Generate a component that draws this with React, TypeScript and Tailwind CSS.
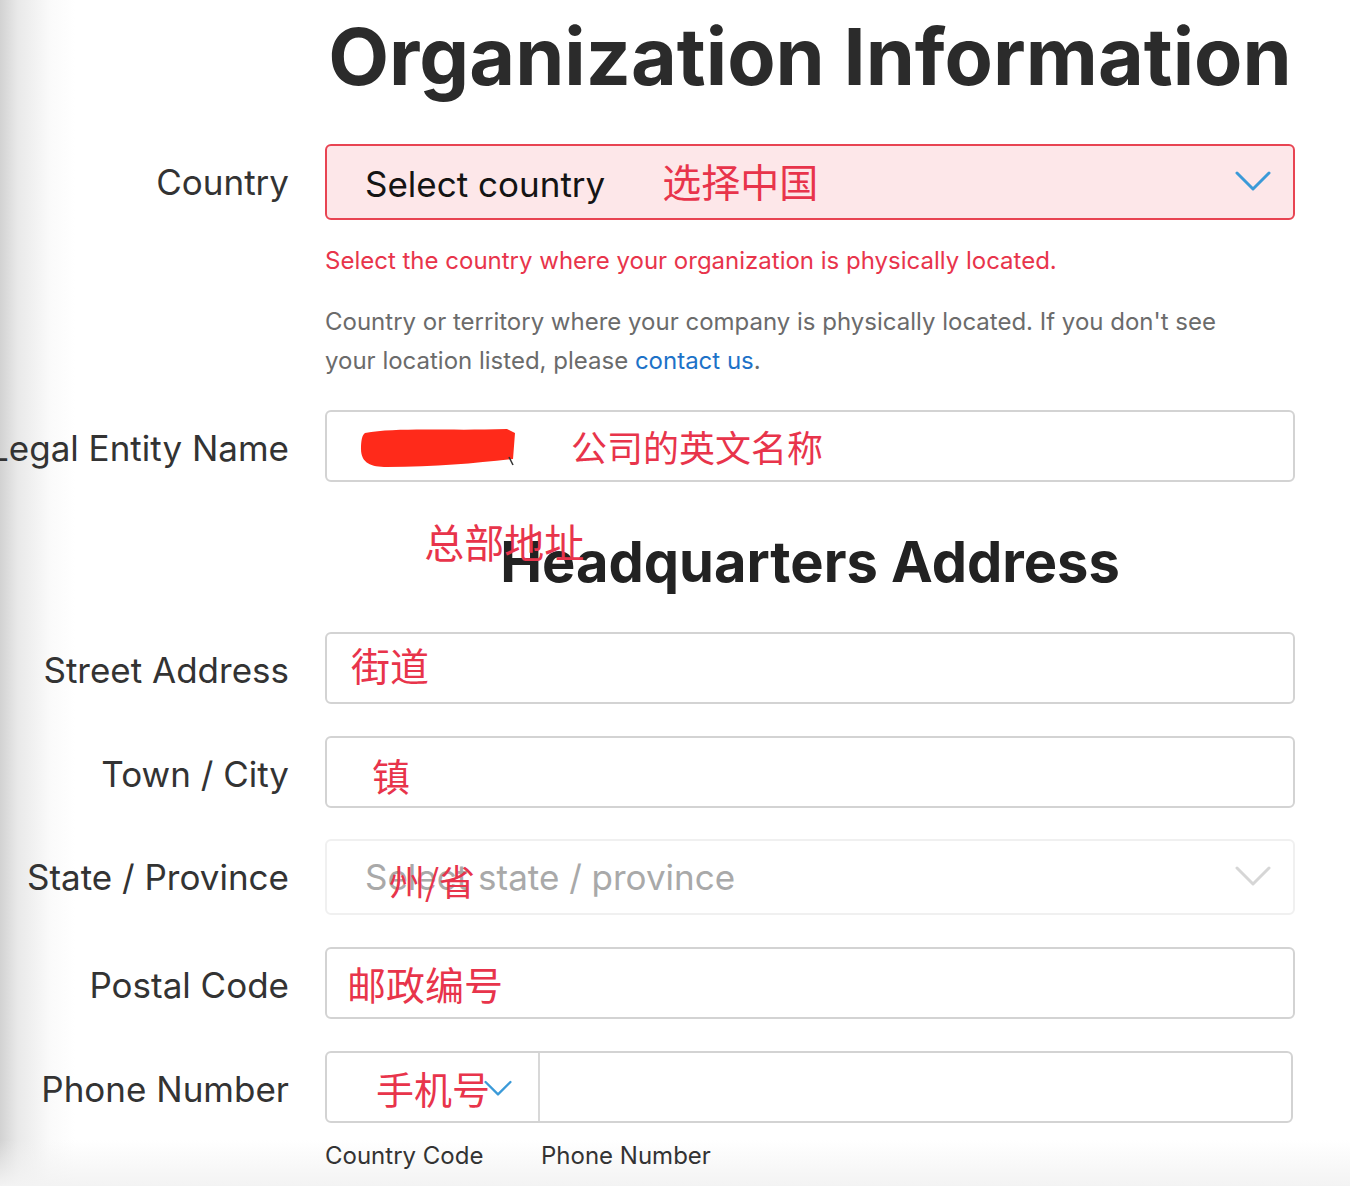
import React from 'react';

const sans = "font-['Inter','Noto_Sans','Noto_Sans_CJK_SC',sans-serif]";
const cjk = "font-['Noto_Sans_CJK_SC','Noto_Sans',sans-serif] text-[#e8344b]";

function Chevron({ color, className }: { color: string; className?: string }) {
  return (
    <svg viewBox="0 0 36 22" className={className} fill="none">
      <polyline points="2,2 18,18 34,2" stroke={color} strokeWidth="3" strokeLinecap="round" strokeLinejoin="round" />
    </svg>
  );
}

function Row({ label, children, labelClass = '' }: { label: string; children: React.ReactNode; labelClass?: string }) {
  return (
    <div className="flex items-start gap-9">
      <div className={`w-[289px] shrink-0 flex justify-end items-center h-[72px] ${labelClass}`}>
        <span className="whitespace-nowrap text-[35px] text-[#333] pt-1">{label}</span>
      </div>
      <div className="w-[970px] shrink-0">{children}</div>
    </div>
  );
}

function TextBox({ children }: { children?: React.ReactNode }) {
  return (
    <div className="h-[72px] rounded-md border-2 border-[#d3d3d3] bg-white flex items-center">
      {children}
    </div>
  );
}

export default function App() {
  return (
    <div
      className={`w-[1350px] h-[1186px] overflow-hidden bg-[linear-gradient(to_right,#d2d2d2_0px,#e9e9e9_18px,#fafafa_50px,#ffffff_75px)] ${sans}`}
    >
      <div className="h-full bg-[linear-gradient(to_bottom,transparent_1140px,#f3f3f3_1186px)] pt-[17px]">
        {/* title */}
        <div className="flex gap-9">
          <div className="w-[289px] shrink-0" />
          <h1 className="w-[970px] text-center text-[79px] leading-none font-bold text-[#2b2b2b] whitespace-nowrap">
            Organization Information
          </h1>
        </div>

        <div className="mt-12 flex flex-col">
          {/* country */}
          <div className="flex items-start gap-9">
            <div className="w-[289px] shrink-0 flex justify-end items-center h-[76px]">
              <span className="whitespace-nowrap text-[35px] text-[#333]">Country</span>
            </div>
            <div className="w-[970px] shrink-0">
              <div className="h-[76px] rounded-md border-2 border-[#e84452] bg-[#fde7e9] flex items-center pl-[38px] pr-[22px]">
                <span className="text-[35px] text-[#141414] pt-1">Select country</span>
                <span className={`${cjk} text-[39px] ml-[57px] -mt-1`}>选择中国</span>
                <Chevron color="#3b9ad8" className="ml-auto w-[36px] h-[22px]" />
              </div>
              <p className="mt-[21px] text-[24px] leading-[39px] text-[#e8344b]">
                Select the country where your organization is physically located.
              </p>
              <p className="mt-[22px] max-w-[930px] text-[24px] leading-[39px] text-[#6b6b6b]">
                Country or territory where your company is physically located. If you don't see your location listed,
                please <span className="text-[#1d72c8]">contact us</span>.
              </p>
            </div>
          </div>

          {/* legal entity */}
          <div className="mt-[30px]">
            <Row label="Legal Entity Name">
              <TextBox>
                <svg viewBox="0 0 164 46" className="ml-[30px] w-[164px] h-[46px]">
                  <path
                    d="M8 10 C40 4 90 8 150 6 L158 10 L156 36 C120 40 80 44 30 44 C14 44 4 40 4 26 C4 18 5 12 8 10 Z"
                    fill="#ff2a1a"
                  />
                  <path d="M152 34 L156 42" stroke="#333" strokeWidth="1.5" />
                </svg>
                <span className={`${cjk} text-[36px] ml-[50px]`}>公司的英文名称</span>
              </TextBox>
            </Row>
          </div>

          {/* headquarters */}
          <div className="mt-[52px] flex gap-9">
            <div className="w-[289px] shrink-0" />
            <div className="w-[970px] flex justify-center">
              <div className="relative">
                <h2 className="text-[56px] leading-none font-bold text-[#222] whitespace-nowrap">
                  Headquarters Address
                </h2>
                <span className={`${cjk} absolute left-[-76px] top-[-23px] text-[40px] whitespace-nowrap`}>总部地址</span>
              </div>
            </div>
          </div>

          <div className="mt-[42px] flex flex-col gap-8">
            <Row label="Street Address">
              <TextBox>
                <span className={`${cjk} text-[39px] ml-[24px] -mt-2`}>街道</span>
              </TextBox>
            </Row>
            <Row label="Town / City">
              <TextBox>
                <span className={`${cjk} text-[38px] ml-[45px] pt-1`}>镇</span>
              </TextBox>
            </Row>
            <div className="flex items-start gap-9 -mt-px">
              <div className="w-[289px] shrink-0 flex justify-end items-center h-[76px]">
                <span className="whitespace-nowrap text-[35px] text-[#333]">State / Province</span>
              </div>
              <div className="w-[970px] shrink-0">
                <div className="h-[76px] rounded-md border-2 border-[#f0f0f0] bg-white flex items-center pl-[38px] pr-[22px]">
                  <div className="relative">
                    <span className="text-[35px] text-[#a9a9a9] whitespace-nowrap">Select state / province</span>
                    <span className={`${cjk} absolute left-[24px] top-[2px] text-[36px] whitespace-nowrap`}>州/省</span>
                  </div>
                  <Chevron color="#d6d6d6" className="ml-auto w-[36px] h-[22px]" />
                </div>
              </div>
            </div>
            <Row label="Postal Code">
              <TextBox>
                <span className={`${cjk} text-[39px] ml-[20px]`}>邮政编号</span>
              </TextBox>
            </Row>
            <Row label="Phone Number">
              <div className="h-[72px] w-[968px] rounded-md border-2 border-[#d3d3d3] bg-white flex">
                <div className="w-[213px] border-r-2 border-[#d8d8d8] flex items-center pl-[49px]">
                  <span className={`${cjk} text-[38px]`}>手机号</span>
                  <Chevron color="#3b9ad8" className="-ml-[6px] mt-[4px] w-[28px] h-[18px]" />
                </div>
                <div className="flex-1" />
              </div>
              <div className="mt-[18px] flex text-[24px] text-[#333] leading-[30px]">
                <span className="w-[216px]">Country Code</span>
                <span>Phone Number</span>
              </div>
            </Row>
          </div>
        </div>
      </div>
    </div>
  );
}
